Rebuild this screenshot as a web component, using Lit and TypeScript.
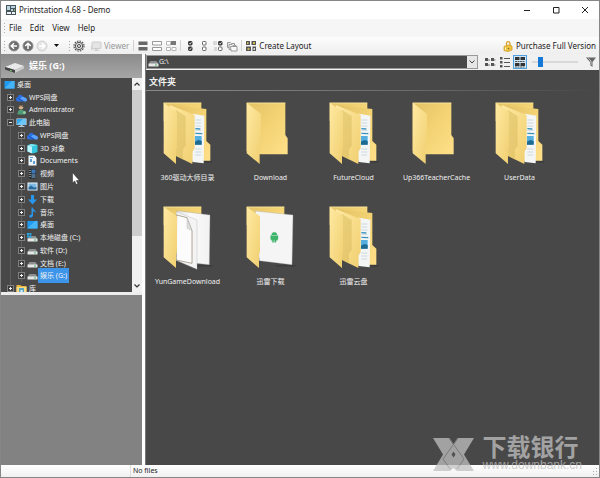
import { LitElement, html, svg, css, TemplateResult, SVGTemplateResult } from "lit";
import { customElement, property } from "lit/decorators.js";

type Art = SVGTemplateResult;

const pic = (w: number, h: number, art: Art, vb = `0 0 ${w} ${h}`): TemplateResult =>
  html`<svg width=${w} height=${h} viewBox=${vb} aria-hidden="true">${art}</svg>`;

/* ---- tree icons, drawn on an 11 x 11 grid ---- */
const drive = svg`<path d="M2.500 4h6l2 3h-10z" fill="#8d9092"/><rect x=".5" y="6.500" width="10" height="3" rx=".6" fill="#e6e8e8"/><rect x="7" y="7.500" width="2" height="1" fill="#4caf6a"/>`;
const treeArt: Record<string, Art> = {
  desktop: svg`<rect x=".5" y="2" width="10" height="7.500" fill="#1e9bf0"/><path d="M.5 9.500 8 2h2.500v7.500z" fill="#46b3f7"/>`,
  cloud: svg`<path d="M0 7.500C0 5.500 1.500 5 2 5c0-2 2.500-3 4-1.500L9.500 7 8 9.500H2C1 9.500 0 8.500 0 7.500z" fill="#2b6fe0"/><path d="M5 5.500c2-1.500 3-.5 3.500 0 1.500 0 2.500 1 2.500 2.300S10 9.800 9 9.800L4 6.500z" fill="#5aa2ff"/><path d="M2 6l5 3.500" stroke="#174aa8" stroke-width=".8"/>`,
  user: svg`<circle cx="5" cy="3.300" r="2.200" fill="#d9b48c"/><path d="M3 3C3 .5 7 .5 7 3L5 2z" fill="#5a4632"/><path d="M1.500 10.500C1.500 7 3 5.800 5 5.800S9 7 9 10.500z" fill="#4f9b75"/><circle cx="8.500" cy="8.500" r="1.500" fill="#8fd0a8"/>`,
  pc: svg`<rect x=".5" y="1.500" width="10" height="6.500" fill="#d5e9f7"/><rect x="1" y="2" width="9" height="5.500" fill="#33a8ee"/><path d="M1 7.500 7 2h3v5.500z" fill="#6cc6f7"/><path d="M4.500 8h2v1h-2zM2.500 9h6v1h-6z" fill="#bcd"/>`,
  cube: svg`<path d="M.5 2.500 4 1l6.500 1v7L6 10.500.5 8.500z" fill="#35c5dc"/><path d="M.5 2.500 5 3.500v7L.5 8.500z" fill="#bdf3f8"/><path d="M.5 2.500 4 1l6.500 1L5 3.500z" fill="#7ee4ee"/>`,
  doc: svg`<path d="M1.500.5h6L9.500 3v7.500h-8z" fill="#f2f6fa"/><path d="M3 2h3v1H3zM3 4h2v3H3zM6 6h2v3H6z" fill="#5b9fd6"/>`,
  video: svg`<rect x="2" y="1" width="7" height="9.500" fill="#23282d"/><path d="M2.500 2h1v1h-1zm0 2h1v1h-1zm0 2h1v1h-1zm0 2h1v1h-1z" fill="#ddd"/><rect x="4.500" y="1.500" width="4" height="4" fill="#3d78b8"/><rect x="4.500" y="6" width="4" height="4" fill="#51718c"/>`,
  image: svg`<rect x=".5" y="1.500" width="10" height="8" fill="#eef4f8"/><rect x="1.500" y="2.500" width="8" height="6" fill="#7db9e2"/><path d="M1.500 8.500V6.500l2.500-2 3 2 2.500-.5v2.500z" fill="#2c6a9d"/>`,
  down: svg`<path d="M4 1h3v4.500h3L5.500 10.500 1 5.500h3z" fill="#2b95ea"/>`,
  music: svg`<path d="M4.500.5h1.200c.2 2 3.300 2.500 3 5.500-.3-1-1.500-1.800-2.700-1.800V8.500C6 10 4.500 10.800 3.200 10.500 1.500 10 2 7.500 4.500 7.700z" fill="#2b95ea"/>`,
  drive,
  sysdrive: svg`${drive}<path d="M0 1h2v2H0zM2.400 1h2v2h-2zM0 3.400h2v2H0zM2.400 3.400h2v2h-2z" fill="#28a8e8"/>`,
  library: svg`<path d="M.5 2h4l1 1h5v8h-10z" fill="#e8b53e"/><path d="M.5 4h10v7H.5z" fill="#f9dc84"/><path d="M3 5h5v6H3z" fill="#57a5c4"/><path d="M4.500 7h2v4h-2z" fill="#dff0f7"/>`,
};

interface Row { level: 0 | 1 | 2; icon: string; text: string; open?: boolean; selected?: boolean }
const rows: Row[] = [
  { level: 0, icon: "desktop", text: "桌面" },
  { level: 1, icon: "cloud", text: "WPS网盘" },
  { level: 1, icon: "user", text: "Administrator" },
  { level: 1, icon: "pc", text: "此电脑", open: true },
  { level: 2, icon: "cloud", text: "WPS网盘" },
  { level: 2, icon: "cube", text: "3D 对象" },
  { level: 2, icon: "doc", text: "Documents" },
  { level: 2, icon: "video", text: "视频" },
  { level: 2, icon: "image", text: "图片" },
  { level: 2, icon: "down", text: "下载" },
  { level: 2, icon: "music", text: "音乐" },
  { level: 2, icon: "desktop", text: "桌面" },
  { level: 2, icon: "sysdrive", text: "本地磁盘 (C:)" },
  { level: 2, icon: "drive", text: "软件 (D:)" },
  { level: 2, icon: "drive", text: "文档 (E:)" },
  { level: 2, icon: "drive", text: "娱乐 (G:)", selected: true },
  { level: 1, icon: "library", text: "库" },
];

/* ---- folder thumbnails, drawn on a 150 x 195 grid ---- */
const defs = svg`<defs>
  <linearGradient id="back" x1="0" y1="0" x2="1" y2="1"><stop offset="0" stop-color="#e3c266"/><stop offset=".5" stop-color="#f3d373"/><stop offset="1" stop-color="#ffe08a"/></linearGradient>
  <linearGradient id="flap" x1="0" y1="0" x2="1" y2="1"><stop offset="0" stop-color="#ffe9a2"/><stop offset="1" stop-color="#f0cf70"/></linearGradient>
  <linearGradient id="page" x1="0" y1="0" x2="1" y2="0"><stop offset="0" stop-color="#e4e4e4"/><stop offset=".4" stop-color="#fafafa"/><stop offset="1" stop-color="#f2f2f2"/></linearGradient>
</defs>`;
const frontFlap = svg`<path d="M2 5 42 34V139L39 149V189L2 157z" fill="url(#flap)"/>`;
const shade = svg`<path d="M90 180H150L146 185H90z" fill="#333" opacity=".5"/>`;
const folders: Record<string, Art> = {
  empty: svg`${defs}<path d="M2 5H118V102L125 112V160H41L2 150z" fill="url(#back)"/><path d="M2 6H118" stroke="#fff0b4" stroke-width="2"/><path d="M2 5 45 39V137L41 147V189L2 157z" fill="url(#flap)"/>`,
  full: svg`${defs}${shade}<path d="M2 5H115V60H2z" fill="url(#back)"/><path d="M2 6H115" stroke="#fff0b4" stroke-width="2"/>
    <path d="M28 13 130 24V120L142 131V179H80z" fill="url(#back)"/>
    <path d="M90 38 124 44 122 187 88 183z" fill="#f4f5f5"/>
    <path d="M97 57h18M97 66h18M97 75h18M97 88h18M97 144h18M97 153h18M97 162h18" stroke="#b9cbd6" stroke-width="2"/>
    <path d="M97 97 118 98M97 83 112 84" stroke="#3a94bd" stroke-width="4"/>
    <path d="M96 105h20v26H96z" fill="#55aee0"/><path d="M96 122 106 117 116 120v11H96z" fill="#1d698f"/>
    <path d="M20 12 95 42V142L88 152V189L39 165z" fill="url(#flap)"/>
    <path d="M38 26 68 46V134L60 145V176L39 165z" fill="#d8b95c" opacity=".5"/>${frontFlap}`,
  pages: svg`${defs}${shade}<path d="M2 5H115V60H2z" fill="url(#back)"/><path d="M2 6H115" stroke="#fff0b4" stroke-width="2"/>
    <path d="M42 17 141 30 139 179 90 174z" fill="url(#page)" stroke="#999"/>
    <path d="M40 20 102 45V193L39 166z" fill="#f4f4f4" stroke="#aaa"/>
    <path d="M41 30 72 38 87 77V175L40 165z" fill="#fcfcfc" stroke="#8b8165" stroke-width="2"/>
    <path d="M72 38V70L87 77z" fill="#ddd" stroke="#aaa"/>${frontFlap}`,
  android: svg`${defs}${shade}<path d="M2 5H115V60H2z" fill="url(#back)"/><path d="M2 6H115" stroke="#fff0b4" stroke-width="2"/>
    <path d="M28 18 141 30 138 179 40 167z" fill="#f5f5f5" stroke="#a5a5a5"/>
    <path d="M77 90a8 8 0 0 1 16 0zM76 92h18v14H90v6h-4v-6h-3v6h-4v-6h-3zM74 92h2v11h-2zM94 92h2v11h-2z" fill="#3fb56c" stroke="#3fb56c"/>${frontFlap}`,
};
const files = [
  { art: "full", name: "360驱动大师目录" },
  { art: "empty", name: "Download" },
  { art: "full", name: "FutureCloud" },
  { art: "empty", name: "Up366TeacherCache" },
  { art: "full", name: "UserData" },
  { art: "pages", name: "YunGameDownload" },
  { art: "android", name: "迅雷下载" },
  { art: "full", name: "迅雷云盘" },
];

/* ---- toolbar icons, drawn on a 12 x 12 grid ---- */
const round = (fill: string, ring: string, arrow: string, path: string) =>
  svg`<circle cx="6" cy="6" r="5" fill=${fill} stroke=${ring}/><path d=${path} stroke=${arrow} stroke-width="1.500" fill="none"/>`;
const check = (x: number, y: number, dark: boolean) =>
  svg`<rect x=${x + 0.5} y=${y + 0.5} width="3.500" height="3.500" rx=".8" fill=${dark ? "#333" : "#fff"} stroke=${dark ? "#333" : "#666"}/>${dark ? svg`<path d=${`M${x + 1} ${y + 2.2}l1 1 1.500-2`} stroke="#fff" stroke-width=".8" fill="none"/>` : ""}`;
const tool: Record<string, Art> = {
  back: round("#6d6d6d", "#8f8f8f", "#fff", "M9 6H3.500M6 3.200 3.200 6 6 8.800"),
  up: round("#6d6d6d", "#8f8f8f", "#fff", "M6 9V3.500M3.200 6 6 3.200 8.800 6"),
  forward: round("#e6e6e6", "#d0d0d0", "#fff", "M3 6h5.500M6 3.200 8.800 6 6 8.800"),
  gear: svg`<circle cx="6" cy="6" r="5" fill="none" stroke="#555" stroke-width="1.200" stroke-dasharray="1.600 1"/><circle cx="6" cy="6" r="3.700" fill="#ddd" stroke="#555"/><circle cx="6" cy="6" r="1.500" fill="#fff" stroke="#444"/>`,
  viewer: svg`<rect x="2" y="2" width="9" height="6.500" rx="1" fill="#e4e4e4" stroke="#ccc"/><path d="M5 9h3v1.500h2V11H3v-.5h2zM1 5v5h2" fill="#d0d0d0"/>`,
  bars: svg`<path d="M1.500 1.500h9V5h-9zM1.500 7h9v3.500h-9z" fill="#666"/>`,
  barsOut: svg`<path d="M1.500 1.500h9V5h-9zM1.500 7.500h9v3h-9z" fill="#fff" stroke="#999"/>`,
  barsMix: svg`<path d="M1.500 1.500h4V5h-4zM1.500 7.500h4v3h-4zM7 7.500h4v3H7z" fill="#fff" stroke="#b5b5b5"/><path d="M6 1h5v4H6z" fill="#777"/>`,
  checks: svg`${check(4, 1, true)}${check(4, 6.5, true)}`,
  boxes: svg`${check(4, 1, false)}${check(4, 6.5, false)}`,
  checkMix: svg`<path d="M1 2h4M1 4h4M2 8h3M2 10h3" stroke="#bbb"/>${check(6, 1, true)}${check(6, 6.5, false)}`,
  stack: svg`<path d="M1.500 2.500h3l1 1h3v4h-7z" fill="#eee" stroke="#999"/><path d="M3 4.500h3l1 1h3v4H3z" fill="#f4f4f4" stroke="#999"/><path d="M4.500 6.500h6.500v4.500H5z" fill="#fafafa" stroke="#999"/>`,
  layout: svg`<path d="M1 1h4v4H1zM6.500 1H11v4H6.500zM1 6.500h5V11H1zM7.500 6.500H11V11H7.500z" fill="#555"/><path d="M2 2h1.500v2H2zM8 2h2v2H8zM2.500 8h2v2h-2z" fill="#c9b458"/><path d="M8.500 8H10v2H8.500z" fill="#ddd"/>`,
  lock: svg`<path d="M4.500 6V3.500C4.500 1 7.500.8 8 3.500V6" fill="none" stroke="#d6a024" stroke-width="1.300"/><path d="M2 6.500 7 5l3 1v4l-4 1.500-4-1z" fill="#f0c544" stroke="#d09a22" stroke-width=".8"/><path d="M3.500 7.500v2.500" stroke="#fff3b8"/><circle cx="6.500" cy="8.500" r=".8" fill="#8a6212"/>`,
  small: svg`<path d="M1 2h3v3H1zM7 2h3v3H7zM1 7h3v3H1zM7 7h3v3H7z" fill="#555"/><path d="M4 4h2M10 4h1.500M4 9h2M10 9h1.500" stroke="#777"/>`,
  list: svg`<path d="M1 1h2.500v2.500H1zM1 5h2.500v2.500H1zM1 9h2.500v2.500H1z" fill="#555"/><path d="M5 2.500h6M5 6.500h6M5 10.500h6" stroke="#555"/>`,
  thumbs: svg`<path d="M1 1h4.500v3H1zM6.500 1H11v3H6.500zM1 7h4.500v3H1zM6.500 7H11v3H6.500z" fill="#333"/><path d="M1 5.500h10M1 11h10" stroke="#555" stroke-dasharray="2 .5"/>`,
  filter: svg`<path d="M1 1.500h10L7.500 6v5L5 9V6z" fill="#666"/><path d="M3.500 2.500 6 5v4" fill="none" stroke="#ccc"/>`,
};

@customElement("tool-button")
class ToolButton extends LitElement {
  @property() icon = "";
  @property() label = "";
  @property() caption = "";
  @property({ type: Boolean }) off = false;
  @property({ type: Boolean, reflect: true }) active = false;
  static styles = css`
    :host { display: block; }
    button {
      display: flex; align-items: center; gap: 2px; height: 14px; padding: 0 1px; border: 0; background: none;
      font: 8px/14px "Noto Sans", "Noto Sans CJK SC", sans-serif; color: #222; white-space: nowrap;
    }
    button:disabled { color: #999; }
    :host([active]) button { background: #cfe6f8; outline: 1px solid #4da0dd; outline-offset: -1px; }
    svg { display: block; flex: none; }
  `;
  render() {
    return html`<button ?disabled=${this.off} aria-label=${this.label || this.caption}>
      ${pic(12, 12, tool[this.icon])}${this.caption ? html`<span>${this.caption}</span>` : ""}
    </button>`;
  }
}

@customElement("folder-tree")
class FolderTree extends LitElement {
  static styles = css`
    :host { display: flex; height: 214px; overflow: hidden; background: #484848; }
    ul {
      flex: 1; display: grid; grid-auto-rows: 1fr; height: 217px; margin: 0; padding: 0; list-style: none;
      font: 7px/11px "Noto Sans", "Noto Sans CJK SC", sans-serif; color: #f2f2f2;
    }
    li { display: flex; align-items: center; gap: 2px; white-space: nowrap; background-repeat: no-repeat; }
    .level0 { padding-left: 3px; }
    .level1 { padding-left: 6px; background-image: linear-gradient(#5e5e5e, #5e5e5e); background-size: 1px 100%; background-position: 9px 0; }
    .level2 {
      padding-left: 17px; background-image: linear-gradient(#5e5e5e, #5e5e5e), linear-gradient(#5e5e5e, #5e5e5e);
      background-size: 1px 100%; background-position: 9px 0, 20px 0;
    }
    .toggle { flex: none; width: 7px; height: 7px; padding: 0; border: 0; background: #484848; }
    svg { display: block; flex: none; }
    .selected { background: #3d95ea; box-shadow: 0 0 0 2px #3d95ea; }
    .scroll { display: flex; flex-direction: column; width: 10px; background: #cdcdcd; }
    .scroll button { height: 12px; padding: 0; border: 0; background: #f1f1f1; display: grid; place-items: center; }
    .thumb { flex: 1; }
    .track { height: 44px; background: #f1f1f1; }
  `;
  render() {
    return html`
      <ul role="tree" aria-label="Folders">
        ${rows.map((r) => html`<li role="treeitem" class="level${r.level}">
          ${r.level ? html`<button class="toggle" aria-label=${r.open ? "Collapse" : "Expand"}>
            ${pic(7, 7, svg`<rect x=".5" y=".5" width="6" height="6" fill="#3c3c3c" stroke="#808080"/><path d=${r.open ? "M2 3.500h3" : "M2 3.500h3M3.500 2v3"} stroke="#eee"/>`)}
          </button>` : ""}
          ${pic(11, 11, treeArt[r.icon])}<span class=${r.selected ? "selected" : ""}>${r.text}</span>
        </li>`)}
      </ul>
      <div class="scroll">
        <button aria-label="Scroll up">${pic(6, 4, svg`<path d="M.5 3.500 3 1l2.500 2.500" fill="none" stroke="#333" stroke-width="1.200"/>`)}</button>
        <div class="thumb"></div>
        <div class="track"></div>
        <button aria-label="Scroll down">${pic(6, 4, svg`<path d="M.5.5 3 3 5.500.5" fill="none" stroke="#333" stroke-width="1.200"/>`)}</button>
      </div>`;
  }
}

@customElement("folder-grid")
class FolderGrid extends LitElement {
  static styles = css`
    :host { display: block; flex: 1; overflow: hidden; background: #484848; color: #f0f0f0; font: 7px/10px "Noto Sans", "Noto Sans CJK SC", sans-serif; }
    h2 {
      margin: 0; padding: 4px 0 1px 3px; font-size: 9px; line-height: 15px; font-weight: 700;
      border-bottom: 1px solid; border-image: linear-gradient(90deg, #8a8a8a, #6a6a6a 60%, #484848) 1;
    }
    .grid { display: grid; grid-template-columns: repeat(auto-fill, 83px); grid-auto-rows: 104px; padding-top: 10px; }
    figure { margin: 0; display: flex; flex-direction: column; align-items: center; gap: 7px; }
    svg { display: block; }
    figcaption { white-space: nowrap; }
  `;
  render() {
    return html`<h2>文件夹</h2>
      <div class="grid">${files.map((f) => html`<figure>${pic(50, 65, folders[f.art], "0 0 150 195")}<figcaption>${f.name}</figcaption></figure>`)}</div>`;
  }
}

@customElement("app-root")
class AppRoot extends LitElement {
  static styles = css`
    :host {
      position: relative; display: flex; flex-direction: column; height: 100vh; box-sizing: border-box; overflow: hidden;
      border: 1px solid #868686; background: #fff; color: #222;
      font: 8px/12px "Noto Sans", "Noto Sans CJK SC", sans-serif;
    }
    svg { display: block; flex: none; }
    .title { display: flex; align-items: center; height: 18px; padding-left: 5px; gap: 3px; }
    h1 { flex: 1; margin: 0; font-size: 8px; font-weight: 400; }
    .windowing { display: flex; }
    .windowing button { width: 29px; height: 18px; padding: 0; border: 0; background: none; display: grid; place-items: center; }
    nav { display: flex; align-items: center; height: 18px; gap: 8px; padding-left: 3px; background: #f6f6f6; }
    nav button { padding: 0; border: 0; background: none; font: inherit; color: inherit; }
    .grip { width: 1px; height: 10px; background: repeating-linear-gradient(#aaa 0 1px, transparent 1px 3px); }
    nav .grip { margin-right: -4px; }
    .toolbar { display: flex; align-items: center; height: 17px; padding: 0 2px 0 3px; background: linear-gradient(#fdfdfd, #eee); }
    .group { display: flex; align-items: center; padding: 0 6px 0 2px; }
    .caret { width: 14px; height: 14px; padding: 0; border: 0; background: none; display: grid; place-items: center; }
    .sep { width: 1px; height: 11px; background: #d2d2d2; margin: 0 2px; }
    .viewer { margin: 0 1px 0 3px; }
    .fill { flex: 1; }
    .body { flex: 1; display: flex; min-height: 0; }
    .side { display: flex; flex-direction: column; width: 141px; background: #ededed; }
    .place { display: flex; align-items: center; height: 24px; gap: 5px; padding-left: 4px; background: linear-gradient(#8b8b8b, #a6a6a6); }
    .place h2 { margin: 0; font-size: 9px; line-height: 12px; color: #fff; font-weight: 700; }
    .preview { flex: 1; margin-top: 3px; background: #828282; }
    .main { flex: 1; display: flex; flex-direction: column; min-width: 0; margin-left: 3px; border-left: 1px solid #777; }
    .address { display: flex; align-items: center; height: 16px; padding-right: 1px; background: #f0f0f0; }
    .combo { flex: 1; display: flex; align-items: center; height: 14px; padding-left: 1px; margin-right: 5px; background: #484848; border: 1px solid #999; box-sizing: border-box; }
    select { flex: 1; min-width: 0; height: 12px; margin-right: -10px; padding: 0 10px 0 0; border: 0; appearance: none; background: none; color: #f0f0f0; font: 7px/12px "Noto Sans", sans-serif; }
    .drop { width: 10px; height: 12px; display: grid; place-items: center; background: #e6e6e6; pointer-events: none; }
    .views { display: flex; gap: 1px; }
    input { appearance: none; width: 46px; height: 12px; margin: 0 6px 0 5px; background: linear-gradient(#d9d9d9, #d9d9d9) center / 100% 2px no-repeat; }
    input::-webkit-slider-thumb { appearance: none; width: 5px; height: 10px; background: #1479d7; }
    .status { display: flex; align-items: center; height: 12px; background: linear-gradient(#fff, #f0f0f0); font-size: 7px; }
    .status span { margin-left: 129px; padding-left: 2px; border-left: 1px solid #ddd; }
    .cursor { position: absolute; left: 71px; top: 171px; }
    .mark { position: absolute; right: 17px; bottom: 6px; display: flex; gap: 9px; align-items: center; color: #c0c0c0; opacity: .75; pointer-events: none; }
    .mark strong { display: block; font: 700 24px/22px "Liberation Sans", "Noto Sans CJK SC", sans-serif; }
    .mark small { display: block; font: 12px/12px "Liberation Sans", sans-serif; }
  `;
  render() {
    const win = (label: string, d: string) =>
      html`<button aria-label=${label}>${pic(8, 8, svg`<path d=${d} fill="none" stroke="#222"/>`)}</button>`;
    return html`
      <header class="title">
        ${pic(10, 10, svg`<rect width="10" height="10" fill="#46545c"/><path d="M1 1h3v4H1zM5 1h4v2H5zM5 4h2v2H5z" fill="#b9d4de"/><path d="M1 7h4v2H1zM6 7h3v2H6z" fill="#eef2f4"/><path d="M8 4h1v2H8z" fill="#8fae58"/>`)}
        <h1>Printstation 4.68 - Demo</h1>
        <div class="windowing">
          ${win("Minimize", "M1 4.500h6")}${win("Maximize", "M1.500 1.500h5.500v5.500h-5.500z")}${win("Close", "M1 1l6 6M7 1 1 7")}
        </div>
      </header>
      <nav aria-label="Menu">
        <div class="grip"></div>
        ${["File", "Edit", "View", "Help"].map((m) => html`<button>${m}</button>`)}
      </nav>
      <div class="toolbar" role="toolbar">
        <div class="grip"></div>
        <div class="group">
          <tool-button icon="back" label="Back"></tool-button>
          <tool-button icon="up" label="Up"></tool-button>
          <tool-button icon="forward" label="Forward" off></tool-button>
          <button class="caret" aria-label="History">${pic(5, 3, svg`<path d="M0 0h5L2.500 3z" fill="#111"/>`)}</button>
        </div>
        <div class="grip"></div>
        <div class="group">
          <tool-button icon="gear" label="Settings"></tool-button>
          <tool-button class="viewer" icon="viewer" caption="Viewer" off></tool-button>
          <div class="sep"></div>
          <tool-button icon="bars" label="Select all"></tool-button>
          <tool-button icon="barsOut" label="Select none"></tool-button>
          <tool-button icon="barsMix" label="Invert selection"></tool-button>
          <div class="sep"></div>
          <tool-button icon="checks" label="Check all"></tool-button>
          <tool-button icon="boxes" label="Uncheck all"></tool-button>
          <tool-button icon="checkMix" label="Invert checks"></tool-button>
          <tool-button icon="stack" label="Folders"></tool-button>
          <div class="sep"></div>
          <tool-button icon="layout" caption="Create Layout"></tool-button>
        </div>
        <div class="fill"></div>
        <tool-button icon="lock" caption="Purchase Full Version"></tool-button>
      </div>
      <div class="body">
        <aside class="side">
          <div class="place">
            ${pic(19, 14, svg`<path d="M0 8 10 4l9 3-9 4z" fill="#e9e9e9"/><path d="M0 8l10 3v3L0 10.500z" fill="#444"/><path d="M10 11l9-4v2.500L10 14z" fill="#ccc"/><path d="M5 11.300l2 .7" stroke="#6c6"/>`)}
            <h2>娱乐 (G:)</h2>
          </div>
          <folder-tree></folder-tree>
          <div class="preview"></div>
        </aside>
        <main class="main">
          <div class="address">
            <div class="combo">
              ${pic(11, 11, drive)}
              <select aria-label="Address"><option>G:\\</option></select>
              <div class="drop">${pic(6, 4, svg`<path d="M.5.5 3 3 5.500.5" fill="none" stroke="#444"/>`)}</div>
            </div>
            <div class="views">
              <tool-button icon="small" label="Small icons"></tool-button>
              <tool-button icon="list" label="List"></tool-button>
              <tool-button icon="thumbs" label="Thumbnails" active></tool-button>
            </div>
            <input type="range" aria-label="Thumbnail size" min="0" max="100" value="14" />
            <tool-button icon="filter" label="Filter"></tool-button>
          </div>
          <folder-grid></folder-grid>
        </main>
      </div>
      <footer class="status"><span>No files</span><div class="fill"></div>
        ${pic(8, 8, svg`<path d="M5 1h1v1H5zM5 4h1v1H5zM2 4h1v1H2zM5 7h1v1H5zM2 7h1v1H2z" fill="#aaa"/>`)}
      </footer>
      <div class="cursor">${pic(8, 13, svg`<path d="M.5.5v10.500l2.200-2 1.500 3.500 1.600-.7L4.400 8.500h3z" fill="#fff" stroke="#222" stroke-width=".5"/>`)}</div>
      <div class="mark">
        ${pic(41, 33, svg`<path d="M0 0H16L20.500 7 25 0H41L31 16.500 41 33H24L20.500 30 17 33H0L10 16.500z" fill="#c0c0c0"/><path d="M16 0 31 21 24 31M25 0 10 21 17 31" fill="none" stroke="#8d8d8d"/><path d="M20.500 13.500 22.500 16.500 20.500 19.500 18.500 16.500z" fill="#555"/>`)}
        <div><strong>下载银行</strong><small>www.downbank.cn</small></div>
      </div>`;
  }
}
